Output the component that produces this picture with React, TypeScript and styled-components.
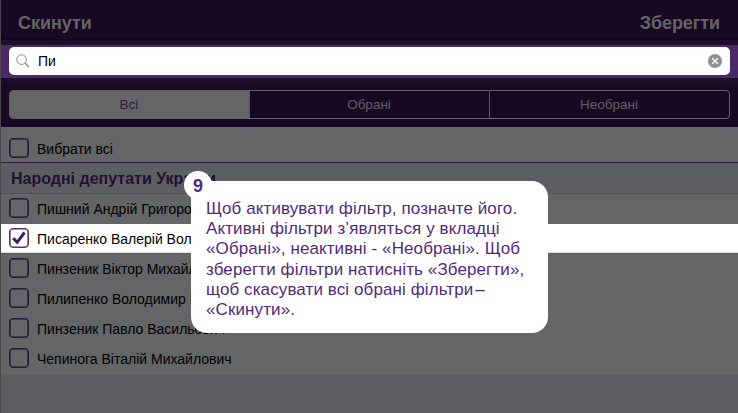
import React from "react";
import styled, { createGlobalStyle } from "styled-components";

const Global = createGlobalStyle`
  * { box-sizing: border-box; }
  body { margin: 0; overflow: hidden; background: #5d5e62; }
`;

const Screen = styled.main`
  position: relative;
  width: 738px;
  height: 413px;
  display: flex;
  flex-direction: column;
  overflow: hidden;
  background: #5d5e62;
  font-family: "Liberation Sans", Arial, sans-serif;
  border-left: 1px solid #49494b;
`;

const Header = styled.header`
  height: 45px;
  flex: none;
  display: flex;
  justify-content: space-between;
  padding: 0 18px 0 17px;
  background: linear-gradient(#190824 39px, #12051a 39px, #12051a 40px, #1c0d28 40px);
`;

const HeaderAction = styled.button`
  height: 46px;
  padding: 0;
  border: 0;
  background: none;
  color: #646566;
  font: bold 18px/46px "Liberation Sans", Arial, sans-serif;
  letter-spacing: -0.06px;
`;

const SearchBand = styled.div`
  height: 33px;
  flex: none;
  margin-left: -1px;
  padding: 2px 8px 3px 8px;
  background: #4b2868;
  border-left: 1px solid #aaa6b0;
`;

const SearchField = styled.div`
  height: 28px;
  display: flex;
  align-items: center;
  padding: 0 8px 0 7px;
  border-radius: 5px;
  background: #fff;
`;

const Query = styled.span`
  flex: 1;
  margin-left: 8px;
  font-size: 14px;
  line-height: 28px;
  color: #000;
`;

const TabBar = styled.nav`
  height: 49px;
  flex: none;
  padding: 12px 8px 8px;
  background: linear-gradient(#1c0d28 5px, #190824 5px);
`;

const Tabs = styled.div`
  height: 29px;
  display: grid;
  grid-template-columns: 239px 240px 1fr;
  border: 1px solid #606163;
  border-radius: 4px;
  overflow: hidden;
`;

const Tab = styled.button<{ $active?: boolean }>`
  padding: 0 1px 0 0;
  border: 0;
  border-left: ${(p) => (p.$active ? "0" : "1px solid #58585c")};
  background: ${(p) => (p.$active ? "#646566" : "transparent")};
  color: ${(p) => (p.$active ? "#2c1740" : "#606064")};
  font: 13.5px/27px "Liberation Sans", Arial, sans-serif;
`;

const Row = styled.label<{ $lit?: boolean; $height?: number; $top?: number }>`
  height: ${(p) => p.$height ?? 30}px;
  flex: none;
  display: flex;
  align-items: flex-start;
  padding: ${(p) => p.$top ?? 4}px 0 0 8px;
  margin-left: ${(p) => (p.$lit ? "-1px" : "0")};
  border-left: ${(p) => (p.$lit ? "1px solid #d5d5d5" : "0")};
  background: ${(p) => (p.$lit ? "linear-gradient(#fff 28px, #e4e4e4 28px, #e4e4e4 29px, #5a5b5d 29px)" : "#646566")};
`;

const Box = styled.span<{ $lit?: boolean }>`
  width: 20px;
  height: 20px;
  flex: none;
  display: flex;
  align-items: center;
  justify-content: center;
  border: 1px solid ${(p) => (p.$lit ? "#53337a" : "#2a183b")};
  box-shadow: inset 0 0 0 0.6px ${(p) => (p.$lit ? "#482667" : "#231034")};
  border-radius: 4px;
`;

const Name = styled.span`
  margin: 1px 0 0 8px;
  font-size: 14px;
  line-height: 20px;
  white-space: nowrap;
  color: #000;
`;

const Section = styled.h2`
  height: 32px;
  flex: none;
  margin: 0;
  padding-left: 10px;
  border-top: 1px solid #2f1a42;
  border-bottom: 1px solid #515256;
  background: #5d5e62;
  color: #231034;
  font-size: 16px;
  line-height: 32px;
`;

const Callout = styled.aside`
  position: absolute;
  left: 190px;
  top: 181px;
  width: 357px;
  height: 152px;
  padding: 18px 0 0 15px;
  border-radius: 16px;
  background: #fff;
`;

const Badge = styled.span`
  position: absolute;
  left: -7px;
  top: -10px;
  width: 28px;
  height: 28px;
  border-radius: 50%;
  background: #fff;
  text-align: center;
  font-size: 18px;
  line-height: 30px;
  font-weight: bold;
  color: #522a7c;
`;

const Line = styled.div`
  height: 20.2px;
  font-size: 17px;
  line-height: 20.2px;
  white-space: nowrap;
  color: #522a7c;
  letter-spacing: 0.1px;
`;

const Dash = styled.span`
  margin-left: -3px;
`;

const people = [
  { name: "Пишний Андрій Григорович" },
  { name: "Писаренко Валерій Володимирович", checked: true },
  { name: "Пинзеник Віктор Михайлович" },
  { name: "Пилипенко Володимир Пилипович" },
  { name: "Пинзеник Павло Васильович" },
  { name: "Чепинога Віталій Михайлович" },
];

const lines = [
  { text: "Щоб активувати фільтр, позначте його." },
  { text: "Активні фільтри з’являться у вкладці" },
  { text: "«Обрані», неактивні - «Необрані». Щоб" },
  { text: "зберегти фільтри натисніть «Зберегти»," },
  { text: "щоб скасувати всі обрані фільтри ", dash: true },
  { text: "«Скинути»." },
];

const SearchIcon = () => (
  <svg width="14" height="14" viewBox="0 0 14 14" fill="none" stroke="#858585">
    <circle cx="5.6" cy="5.6" r="4.8" />
    <path d="M9.2 9.2 13 13" strokeWidth="1.3" />
  </svg>
);

const ClearIcon = () => (
  <svg width="14" height="14" viewBox="0 0 14 14">
    <circle cx="7" cy="7" r="7" fill="#8e8e93" />
    <path d="M4.2 4.2 9.8 9.8M9.8 4.2 4.2 9.8" stroke="#fff" strokeWidth="1.4" />
  </svg>
);

const CheckIcon = () => (
  <svg width="16" height="16" viewBox="0 0 16 16" fill="none" stroke="#3f1c62" strokeWidth="3">
    <path d="M2.2 8.3 6.2 12.3 13.5 2.5" />
  </svg>
);

export default function App() {
  return (
    <>
      <Global />
      <Screen>
        <Header>
          <HeaderAction>Скинути</HeaderAction>
          <HeaderAction>Зберегти</HeaderAction>
        </Header>
        <SearchBand>
          <SearchField>
            <SearchIcon />
            <Query>Пи</Query>
            <ClearIcon />
          </SearchField>
        </SearchBand>
        <TabBar>
          <Tabs>
            <Tab $active>Всі</Tab>
            <Tab>Обрані</Tab>
            <Tab>Необрані</Tab>
          </Tabs>
        </TabBar>
        <Row $height={35} $top={11}>
          <Box />
          <Name>Вибрати всі</Name>
        </Row>
        <Section>Народні депутати України</Section>
        {people.map((p) => (
          <Row key={p.name} $lit={p.checked}>
            <Box $lit={p.checked}>{p.checked && <CheckIcon />}</Box>
            <Name>{p.name}</Name>
          </Row>
        ))}
        <Callout>
          <Badge>9</Badge>
          {lines.map((l) => (
            <Line key={l.text}>
              {l.text}
              {l.dash && <Dash>–</Dash>}
            </Line>
          ))}
        </Callout>
      </Screen>
    </>
  );
}
